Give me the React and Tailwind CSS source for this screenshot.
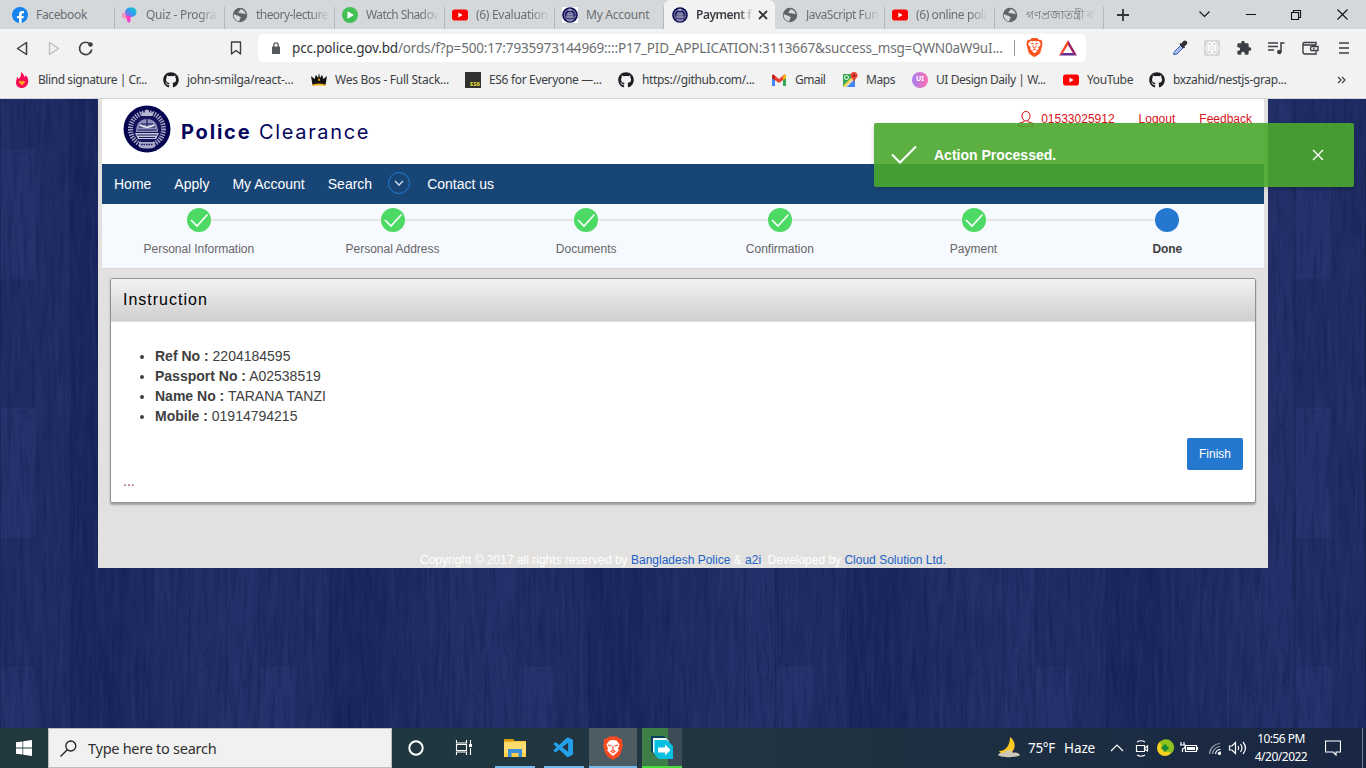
import React from "react";
import { FaGithub, FaFacebookF } from "react-icons/fa";
import { SiBrave } from "react-icons/si";
import { VscVscode } from "react-icons/vsc";
import { MdExtension } from "react-icons/md";

const ui = "font-['Noto_Sans','Open_Sans',sans-serif]";

function Emblem({ className }) {
  return (
    <svg viewBox="0 0 48 48" className={className}>
      <circle cx="24" cy="24" r="23.5" fill="#06054f" />
      <circle cx="24" cy="24" r="16.500" fill="none" stroke="#a9a8c8" strokeWidth="5" strokeDasharray="1.4 1.1" />
      <circle cx="24" cy="24" r="13.5" fill="#17165c" />
      <path d="M24 4l3 4 3-1-1 4h-10l-1-4 3 1z" fill="#b9b8d2" />
      <path d="M13 27c0-8 4-13 11-13s11 5 11 13z" fill="#8f8eb8" />
      <path d="M16 22h16M14.500 25h19M18 19h12M24 13v9" stroke="#17165c" strokeWidth="1.1" />
      <path d="M17 20c4 3 10 3 14 0" stroke="#fff" strokeWidth="1.300" fill="none" />
      <path d="M12 28h24l-3 6H15z" fill="#c6c5db" />
      <path d="M14 30h20M16 32.500h16" stroke="#17165c" strokeWidth="1" />
      <path d="M16 37h16v5c-4 2-12 2-16 0z" fill="#a9a8c8" />
      <path d="M18 39.500h12" stroke="#17165c" strokeWidth="1.600" strokeDasharray="1.500 1" />
    </svg>
  );
}

function YouTube() {
  return (
    <svg viewBox="0 0 16 16" className="h-4 w-4 shrink-0">
      <rect x="0" y="2.500" width="16" height="11" rx="2.800" fill="#f00" />
      <path d="M6.400 5.600v4.800l4.200-2.400z" fill="#fff" />
    </svg>
  );
}

function Globe() {
  return (
    <svg viewBox="0 0 16 16" className="h-4 w-4 shrink-0">
      <circle cx="8" cy="8" r="7.200" fill="#5f6368" />
      <path d="M1.800 7.200c1.800.3 2.900 1.300 4 1.300 1 0 1 1.200 2.300 1.200 1 0 .7 1.500-.2 2l-.5 2.500c-3.200 0-6-3-5.600-7z" fill="#d5d8da" />
      <path d="M8.400 2.300c-1 .8-.2 1.700-1.300 2.100-1 .4-1.200 1.300-.2 1.700 1.300.4 2.200-.4 3 .5.8 1 1.900.3 3.700.8-.1-2.700-2.500-5-5.200-5.100z" fill="#d5d8da" />
    </svg>
  );
}

function TabIcon({ kind }) {
  if (kind === "yt") return <YouTube />;
  if (kind === "globe") return <Globe />;
  if (kind === "fb")
    return (
      <span className="flex h-4 w-4 shrink-0 items-end justify-center overflow-hidden rounded-full bg-[#1584ee]">
        <FaFacebookF className="relative top-[1px] h-[13px] w-[13px] text-white" />
      </span>
    );
  if (kind === "quiz")
    return (
      <svg viewBox="0 0 16 16" className="h-4 w-4 shrink-0">
        <defs>
          <linearGradient id="quiz" x1="1" y1="0" x2="0" y2="1">
            <stop offset="0" stopColor="#12d6b4" />
            <stop offset=".45" stopColor="#2b9df4" />
            <stop offset="1" stopColor="#e64be0" />
          </linearGradient>
        </defs>
        <path d="M9 .5c4 0 5.500 2 5.500 4.800 0 2.700-2 4.500-5 4.700L6 11C3.800 9 2.500 8.500 2.800 6 3.200 2.500 5 .5 9 .5z" fill="url(#quiz)" />
        <path d="M1.500 6c-1 2-.6 4 .3 5M3.500 7c-.8 1.500-.5 3.500.5 5" stroke="#ff7bb0" strokeWidth="1.300" fill="none" />
        <path d="M4.200 9h4.300v5q-2 3.500-3.300 0z" fill="#ff3cc8" />
      </svg>
    );
  if (kind === "play")
    return (
      <svg viewBox="0 0 16 16" className="h-4 w-4 shrink-0">
        <circle cx="8" cy="8" r="8" fill="#42c054" />
        <path d="M5.500 4.200v7.600l6.500-3.800z" fill="#fff" />
      </svg>
    );
  return (
    <span className={kind === "embw" ? "h-4 w-4 shrink-0 bg-white" : "h-4 w-4 shrink-0"}>
      <Emblem className="h-4 w-4" />
    </span>
  );
}

const fade = "[mask-image:linear-gradient(to_right,#000_76%,rgba(0,0,0,0.1))]";

const tabs = [
  ["fb", "Facebook", "w-[115px] pl-3", "tracking-[-0.35px]"],
  ["quiz", "Quiz - Progra", "w-[110px] pl-[7px]", "tracking-[-0.25px] " + fade],
  ["globe", "theory-lecture", "w-[110px] pl-[7px]", "tracking-[-0.55px] " + fade],
  ["play", "Watch Shadov", "w-[110px] pl-[7px]", "tracking-[-0.6px] " + fade],
  ["yt", "(6) Evaluation", "w-[110px] pl-[7px]", "tracking-[-0.3px] " + fade],
  ["embw", "My Account", "w-[109px] pl-[7px]", "tracking-[-0.25px]"],
];
const tabsAfter = [
  ["globe", "JavaScript Fun", "w-[110px] pl-[7px]", "tracking-[-0.5px] " + fade],
  ["yt", "(6) online poli", "w-[110px] pl-[7px]", "tracking-[-0.4px] " + fade],
  ["globe", "গণপ্রজাতন্ত্রী ব", "w-[109px] pl-[7px]", fade],
];

function Tab({ t }) {
  return (
    <div className={"flex h-[22px] items-center border-r border-[#b4b8ba] pb-[6px] " + t[2]}>
      <TabIcon kind={t[0]} />
      <div className={"ml-2 whitespace-nowrap text-[12px] leading-[18px] text-[#6b6f72] " + t[3]}>{t[1]}</div>
    </div>
  );
}

function TabStrip() {
  return (
    <div className="flex h-[29px] bg-[#d4d8da]">
      <div className="flex pt-[7px]">
        {tabs.map((t) => <Tab key={t[1]} t={t} />)}
      </div>
      <div className="flex w-[111px] items-center rounded-t-[6px] bg-[#f2f2f2] pl-2 pt-px">
        <TabIcon kind="emb" />
        <div className={"ml-2 w-[56px] whitespace-nowrap text-[12px] font-semibold tracking-[-0.5px] text-[#3b3e44] " + fade}>Payment f</div>
        <svg viewBox="0 0 10 10" className="ml-[6px] h-[10px] w-[10px]"><path d="M1 1l8 8M9 1L1 9" stroke="#333" strokeWidth="1.800" /></svg>
      </div>
      <div className="flex pt-[7px]">
        {tabsAfter.map((t) => <Tab key={t[1]} t={t} />)}
      </div>
      <svg viewBox="0 0 12 12" className="ml-[13px] mt-[9px] h-3 w-3"><path d="M6 0v12M0 6h12" stroke="#333" strokeWidth="1.800" /></svg>
      <svg viewBox="0 0 150 14" className="ml-[69px] mt-[7px] h-[14px] w-[150px]" fill="none" stroke="#111" strokeWidth="1.100">
        <path d="M1.500 4.500l5 5 5-5M48 7.500h10" />
        <path d="M93.500 5.500h7v7h-7zM95.500 5.500v-2h7v7h-2" />
        <path d="M139.500 2.500l10 10M149.500 2.500l-10 10" />
      </svg>
    </div>
  );
}

function Toolbar() {
  return (
    <div className="flex h-[37px] items-center bg-[#f2f2f2]">
      <svg viewBox="0 0 100 20" className="h-5 w-[100px]" fill="none" strokeLinejoin="round">
        <path d="M26.500 4.500v12l-9-6z" stroke="#3b3e44" strokeWidth="1.500" />
        <path d="M49.500 4.500v12l9-6z" stroke="#bbb" strokeWidth="1.300" />
        <path d="M90.500 6.500a6.200 6.200 0 1 0 1.300 5" stroke="#3b3e44" strokeWidth="1.600" />
        <circle cx="90.500" cy="6.500" r="2.300" fill="#3b3e44" />
      </svg>
      <svg viewBox="0 0 12 14" className="ml-[130px] h-[14px] w-3" fill="none"><path d="M1.500 1h9v12L6 9.500 1.500 13z" stroke="#3b3e44" strokeWidth="1.400" strokeLinejoin="round" /></svg>
      <div className="ml-4 flex h-7 w-[828px] items-center rounded bg-white">
        <svg viewBox="0 0 10 12" className="ml-[13px] h-3 w-[10px]"><path d="M1 4.500h8V12H1z" fill="#55585c" /><path d="M2.800 5V3a2.200 2.200 0 0 1 4.400 0v2" fill="none" stroke="#55585c" strokeWidth="1.300" /></svg>
        <div className="ml-[11px] w-[716px] whitespace-nowrap pt-px text-[13.500px] tracking-[-0.165px] text-[#6b6f72]">
          <span className="text-[#303338]">pcc.police.gov.bd</span>/ords/f?p=500:17:7935973144969::::P17_PID_APPLICATION:3113667&amp;success_msg=QWN0aW9uI...
        </div>
        <div className="ml-[6px] h-4 w-px bg-[#999]" />
        <SiBrave className="ml-[10px] h-[19px] w-[19px] text-[#fb5420]" />
        <svg viewBox="0 0 18 16" className="ml-[15px] h-4 w-[18px]">
          <path d="M9 0L0 15.500l3.600-2L9 5z" fill="#ff4724" />
          <path d="M0 15.500h18l-4-2.500H4z" fill="#662d91" />
          <path d="M9 0l9 15.500-4-2.300L9 5z" fill="#9e1f63" />
        </svg>
      </div>
      <svg viewBox="0 0 16 16" className="ml-[86px] h-4 w-4">
        <path d="M1.500 14.500l1-3 6-6 2.500 2.500-6 6z" fill="#a9bde8" stroke="#3c5cc0" strokeWidth="1" />
        <path d="M8 3.500l4.500 4.500M9 5l3-3.500c1.500-1 3.300.8 2.200 2.200L11 7z" stroke="#2f3237" strokeWidth="1.500" fill="#2f3237" />
      </svg>
      <svg viewBox="0 0 16 16" className="ml-4 h-4 w-4" fill="none" stroke="#fff">
        <rect width="16" height="16" fill="#d8d8d8" stroke="none" />
        <ellipse cx="8" cy="8" rx="6.500" ry="2.600" /><ellipse cx="8" cy="8" rx="6.500" ry="2.600" transform="rotate(60 8 8)" /><ellipse cx="8" cy="8" rx="6.500" ry="2.600" transform="rotate(120 8 8)" /><circle cx="8" cy="8" r="1" fill="#fff" />
      </svg>
      <MdExtension className="ml-[16px] h-4 w-4 text-[#3b3e44]" />
      <svg viewBox="0 0 17 14" className="ml-[16px] h-[14px] w-[17px]" fill="none" stroke="#3b3e44" strokeWidth="1.500"><path d="M0 2h10M0 5.500h10M0 9h6M13 11V2h3.500" /><circle cx="11.300" cy="11" r="1.500" fill="#3b3e44" /></svg>
      <svg viewBox="0 0 17 14" className="ml-[17px] h-[14px] w-[17px]" fill="none" stroke="#3b3e44" strokeWidth="1.400"><path d="M14 4V1.500H2.500q-1.500 0-1.500 2V11q0 2 2 2h11v-2.500M1 4h13M9.500 5.500H16v4H9.500q-1 0-1-2t1-2z" /><path d="M11 7.500h1.500" /></svg>
      <svg viewBox="0 0 10 12" className="ml-[20px] h-3 w-[10px]"><path d="M0 1h10M0 6h10M0 11h10" stroke="#3b3e44" strokeWidth="1.700" /></svg>
    </div>
  );
}

function BookmarkIcon({ kind }) {
  if (kind === "yt") return <YouTube />;
  if (kind === "gh") return <FaGithub className="h-4 w-4 shrink-0 text-[#1b1f24]" />;
  if (kind === "es6") return <span className="flex h-4 w-4 shrink-0 items-end justify-end bg-[#323330] pr-[1px] text-[6px] font-bold leading-[7px] text-[#e8e337]">ES6</span>;
  if (kind === "ui") return <span className="flex h-4 w-4 shrink-0 items-center justify-center rounded-full bg-linear-to-r from-[#a77bf0] to-[#fb6ab0] text-[7px] font-bold text-white">UI</span>;
  return (
    <svg viewBox="0 0 16 16" className="h-4 w-4 shrink-0">
      {kind === "flame" && <g><path d="M7 0c3 2 3 4 3.500 5 .8-.3 1-1.500 1-2 2.500 2.500 3 5 2.700 7-.5 3.500-3 6-6.400 6C4 16 2 13.500 2 10.500 2 8 3 7 3 5c1 .3 1.300 1 1.500 2C6.500 5.500 7.500 3 7 0z" fill="#fb0a55" /><path d="M8 13.500L5.300 10.800c-1-1.300 1-3 2.700-1.300 1.700-1.700 3.700 0 2.700 1.300z" fill="#ffab1a" /></g>}
      {kind === "crown" && <g><path d="M0 4l3.500 3L5 2.800 7 6l1-5 1 5 2-3.200L12.500 7 16 4l-1.500 9h-13z" fill="#111" /><path d="M1.500 12.500q6.500-2 13 0v1.500q-6.500-1.500-13 0zM8 6l1.200 2L8 9.200 6.800 8z" fill="#eaa812" /></g>}
      {kind === "gmail" && <g transform="translate(0 2)"><path d="M1 1.500h3V12H1z" fill="#4285f4" /><path d="M12 1.500h3V12h-3z" fill="#34a853" /><path d="M1 1v3l7 5 7-5V1l-1.500-.5L8 5 2.500.5z" fill="#ea4335" /><path d="M12 2.500L14 .5q1 0 1 1.500v2l-3 2.200z" fill="#fbbc04" /><path d="M1 2Q1 .5 2.500.5L4 2.500v3.700L1 4z" fill="#c5221f" /></g>}
      {kind === "maps" && <g><path d="M1 2h12v13H1z" fill="#34a853" /><path d="M1 15L13 3v12z" fill="#d5d7d9" /><path d="M5 15l8-8v8z" fill="#4285f4" /><path d="M1 14L12 3l1.500 1.500L3 15z" fill="#fbd34c" /><circle cx="4.500" cy="5.500" r="2" fill="none" stroke="#fff" /><path d="M12 0a3.600 3.600 0 0 1 3.600 3.600C15.600 6 12.500 7 12 10.500 11.500 7 8.400 6 8.400 3.600A3.600 3.600 0 0 1 12 0z" fill="#ea4335" /><circle cx="12" cy="3.600" r="1.200" fill="#8c1a12" /></g>}
    </svg>
  );
}

const bookmarks = [
  ["flame", "Blind signature | Cr...", "w-[149px]", "tracking-[-0.43px]"],
  ["gh", "john-smilga/react-...", "w-[148px]", "tracking-[-0.3px]"],
  ["crown", "Wes Bos - Full Stack...", "w-[154px]", "tracking-[-0.26px]"],
  ["es6", "ES6 for Everyone —...", "w-[153px]", "tracking-[-0.33px]"],
  ["gh", "https://github.com/...", "w-[153px]", "tracking-[-0.34px]"],
  ["gmail", "Gmail", "w-[71px]", "tracking-[-0.5px]"],
  ["maps", "Maps", "w-[70px]", "tracking-[-0.4px]"],
  ["ui", "UI Design Daily | W...", "w-[151px]", "tracking-[-0.43px]"],
  ["yt", "YouTube", "w-[86px]", "tracking-[-0.35px]"],
  ["gh", "bxzahid/nestjs-grap...", "w-[188px]", "tracking-[-0.35px]"],
];

function Bookmarks() {
  return (
    <div className="flex h-[33px] items-center border-b border-[#d3d5d6] bg-[#f2f2f2] pb-[5px] pl-[14px]">
      {bookmarks.map((b, i) => (
        <div key={i} className={"flex shrink-0 items-center " + b[2]}>
          <BookmarkIcon kind={b[0]} />
          <span className={"ml-2 whitespace-nowrap text-[12px] leading-4 text-[#3b3e44] " + b[3]}>{b[1]}</span>
        </div>
      ))}
      <svg viewBox="0 0 9 8" className="h-2 w-[9px]" fill="none" stroke="#44474b" strokeWidth="1.300"><path d="M1 1l3 3-3 3M5 1l3 3-3 3" /></svg>
    </div>
  );
}

function Wood() {
  return (
    <svg className="absolute inset-0 h-full w-full" width="1366" height="629">
      <defs>
        <filter id="grain" x="0" y="0" width="100%" height="100%" colorInterpolationFilters="sRGB">
          <feTurbulence type="fractalNoise" baseFrequency="0.2 0.015" numOctaves="4" seed="8" />
          <feColorMatrix values="0 0 0 0 0.18  0 0 0 0 0.24  0 0 0 0 0.48  3 0 0 0 -1.35" />
        </filter>
        <filter id="shade" x="0" y="0" width="100%" height="100%" colorInterpolationFilters="sRGB">
          <feTurbulence type="fractalNoise" baseFrequency="0.25 0.02" numOctaves="3" seed="21" />
          <feColorMatrix values="0 0 0 0 0.05  0 0 0 0 0.08  0 0 0 0 0.27  3 0 0 0 -1.45" />
        </filter>
        <pattern id="planks" width="259" height="259" patternUnits="userSpaceOnUse">
          <rect width="259" height="259" fill="#1f2c63" />
          <rect y="50" width="36" height="130" fill="#26346e" opacity=".7" />
          <rect x="70" width="55" height="259" fill="#1a265d" />
          <rect x="125" width="28" height="259" fill="#1d2960" />
          <rect x="190" width="36" height="259" fill="#212e66" />
          <rect x="226" width="33" height="259" fill="#222f68" />
          <path d="M.5 0v259M70.500 0v259M189.500 0v259M226.500 0v259M257.500 0v259" stroke="#142050" opacity=".6" />
          <path d="M82 0l3 45-9 30-6 60M95 0l8 35 6 45 8 55M84 118q-10 20-6 50M84 118q14 12 13 30M150 30q15 14 15 38M200 30q14 22 8 40 20 20 6 50M190 60q25-10 16-30M215 75q15-14 17 20M245 30q-9 17 0 40 12-20 0-40M12 60q12-14 20 0" fill="none" stroke="#131d4f" opacity=".5" />
        </pattern>
      </defs>
      <rect width="1366" height="629" fill="url(#planks)" />
      <rect width="1366" height="629" filter="url(#grain)" opacity=".3" />
      <rect width="1366" height="629" filter="url(#shade)" opacity=".3" />
    </svg>
  );
}

const steps = ["Personal Information", "Personal Address", "Documents", "Confirmation", "Payment", "Done"];

function Progress() {
  return (
    <div className="flex h-[65px] border-b border-[#d5d8da] bg-[#f6f9fe] pt-1">
      {steps.map((s, i) => (
        <div key={s} className="flex flex-1 flex-col items-center">
          <div className="flex w-full items-center">
            <span className={"h-[2px] flex-1 " + (i > 0 ? "bg-[#e6e6e6]" : "")} />
            {i < 5 ? (
              <span className="flex h-6 w-6 items-center justify-center rounded-full bg-[#4cd964]">
                <svg viewBox="0 0 24 24" className="h-6 w-6" fill="none"><path d="M4 12l6 6L20.500 6.500" stroke="#fff" strokeWidth="1.600" /></svg>
              </span>
            ) : (
              <span className="h-6 w-6 rounded-full bg-[#2578cf]" />
            )}
            <span className={"h-[2px] flex-1 " + (i < 5 ? "bg-[#e6e6e6]" : "")} />
          </div>
          <span className={"mt-[9px] text-[12px] leading-4 " + (i === 5 ? "font-bold tracking-[-0.1px] text-[#404040]" : "text-[#666]")}>{s}</span>
        </div>
      ))}
    </div>
  );
}

const details = [
  ["Ref No :", "2204184595"],
  ["Passport No :", "A02538519"],
  ["Name No :", "TARANA TANZI"],
  ["Mobile :", "01914794215"],
];

function Site() {
  return (
    <div className="relative h-[629px] overflow-hidden font-['Liberation_Sans',Arial,sans-serif]">
      <Wood />
      <div className="relative mx-auto flex h-[469px] w-[1170px] flex-col bg-[#e2e1df] px-1">
        <div className="flex h-[65px] justify-between bg-white">
          <div className="flex pl-[21px] pt-[6px]">
            <Emblem className="h-12 w-12" />
            <div className="ml-[10px] mt-[15px] flex whitespace-nowrap font-['Inter',sans-serif] text-[20px] leading-6 text-[#06055c]">
              <b className="w-[78px] tracking-[1.800px]">Police</b><span className="tracking-[1.650px]">Clearance</span>
            </div>
          </div>
          <div className="flex pr-3 pt-3 text-[12px] leading-4 text-[#d9101a]">
            <svg viewBox="0 0 16 16" className="mr-[7px] h-4 w-4" fill="none" stroke="#d9101a" strokeWidth="1"><path d="M8 .5c2.800 0 4 2 4 4.500S10.500 10 8 10 4 7.500 4 5 5.200.5 8 .5zM6 9.500v1.300L.5 12.500v3h15v-3L10 10.800V9.500" /></svg>
            <span>01533025912</span><span className="ml-6">Logout</span><span className="ml-6">Feedback</span>
          </div>
        </div>
        <nav className="flex h-10 items-center bg-[#174676] pl-3 text-[14px] text-white">
          <span>Home</span><span className="ml-[23px]">Apply</span><span className="ml-[23px]">My Account</span><span className="ml-[23px]">Search</span>
          <span className="relative -top-px ml-4 flex h-[22px] w-[22px] items-center justify-center rounded-full border border-[#2578cf]">
            <svg viewBox="0 0 10 6" className="h-[6px] w-[10px]" fill="none"><path d="M1 1l4 4 4-4" stroke="#dce6f0" strokeWidth="1.300" /></svg>
          </span>
          <span className="ml-[17px]">Contact us</span>
        </nav>
        <Progress />
        <section className="mx-2 mt-[9px] flex h-[225px] flex-col rounded-[2px] border border-[#929092] bg-white shadow-[0_2px_2px_rgba(0,0,0,0.28)]">
          <h1 className="flex h-[43px] items-center border-b border-[#e0e0e0] bg-linear-to-b from-[#f3f3f3] to-[#cfcfcf] pl-3 text-[16px] leading-5 tracking-[1px] text-black">Instruction</h1>
          <ul className="ml-11 mt-6 list-disc text-[14px] leading-5 text-[#404040]">
            {details.map((d) => <li key={d[0]}><b>{d[0]}</b> {d[1]}</li>)}
          </ul>
          <button className="mr-3 mt-3 h-8 w-14 self-end rounded-[2px] bg-[#2578cf] text-[12px] text-white">Finish</button>
          <div className="ml-3 mt-px text-[14px] leading-5 text-[#a03c3c]">...</div>
        </section>
        <footer className="mt-[49px] pl-[318px] text-[12px] leading-4 text-white">
          Copyright © 2017 all rights reserved by <span className="text-[#2062c8]">Bangladesh Police</span> &amp; <span className="text-[#2062c8]">a2i</span>. Developed by <span className="text-[#2062c8]">Cloud Solution Ltd.</span>
        </footer>
      </div>
      <div className="absolute right-3 top-[24px] flex h-16 w-[480px] items-center rounded-[2px] bg-[rgba(74,168,45,0.905)] pl-[17px] pr-[30px] text-white shadow-[0_2px_4px_rgba(0,0,0,0.2)]">
        <svg viewBox="0 0 26 20" className="h-5 w-[26px]" fill="none"><path d="M1 9.500l8 8L25 1.500" stroke="#fff" strokeWidth="2" /></svg>
        <b className="ml-[17px] flex-1 text-[14px]">Action Processed.</b>
        <svg viewBox="0 0 12 12" className="h-3 w-3"><path d="M1 1l10 10M11 1L1 11" stroke="#fff" strokeWidth="1.400" /></svg>
      </div>
    </div>
  );
}

function Taskbar() {
  return (
    <div className="flex h-10 bg-linear-to-r from-[#21393f] via-[#203540] to-[#192642] text-white">
      <div className="flex w-12 items-center justify-center">
        <svg viewBox="0 0 16 16" className="h-4 w-4" fill="#fff"><path d="M0 2.300l6.500-.9v6.200H0zM7.200 1.300L16 0v7.600H7.200zM0 8.400h6.500v6.200L0 13.700zM7.200 8.400H16V16l-8.800-1.300z" /></svg>
      </div>
      <div className="flex w-[344px] items-center border border-[#bdbdbd] bg-[#f1f1f1] pl-[11px] text-[#303030]">
        <svg viewBox="0 0 17 17" className="h-[17px] w-[17px]" fill="none" stroke="#222" strokeWidth="1.300"><circle cx="10.800" cy="6" r="5" /><path d="M7.300 9.800L.5 16.500" /></svg>
        <span className="ml-[11px] pt-px text-[14.500px] tracking-[-0.270px]">Type here to search</span>
      </div>
      <svg viewBox="0 0 48 40" className="h-10 w-12" fill="none"><circle cx="24" cy="20" r="6.700" stroke="#fff" strokeWidth="2" /></svg>
      <svg viewBox="0 0 55 40" className="h-10 w-[55px]" fill="none" stroke="#fff" strokeWidth="1.100"><path d="M16.500 12v3h10v-3M16.500 27v-3h10v3M16.500 16.500h10v6h-10zM30.500 12v4M30.500 20v7" /><path d="M29 16h3v3h-3z" fill="#fff" stroke="none" /></svg>
      <div className="flex w-10 items-center justify-center border-b-2 border-[#76b9ed]">
        <svg viewBox="0 0 22 18" className="mt-[2px] h-[18px] w-[22px]"><path d="M0 0h9l1.500 2H22v16H0z" fill="#ffcf48" /><path d="M0 0h9l1.500 2.500H0z" fill="#d99a13" /><path d="M0 3.500h22V14H0z" fill="#ffdc70" /><path d="M4 10h14v8h-3.500v-4h-7v4H4z" fill="#3d8fd8" /></svg>
      </div>
      <div className="ml-[9px] flex w-10 items-center justify-center border-b-2 border-[#76b9ed]"><VscVscode className="mt-[2px] h-6 w-6 text-[#23a0e8]" /></div>
      <div className="ml-[5px] flex w-12 items-center justify-center border-b-2 border-[#76b9ed] bg-[#4d5c62]">
        <svg viewBox="0 0 20 24" className="mt-px h-6 w-5"><path d="M4 2.500L6 .5h8l2 2 2-.2 1.600 3.200-.8 2L20 9l-2.500 9-2 2.500L10 24l-5.500-3.500-2-2.500L0 9l1.200-1.500-.8-2L2 2.300z" fill="#fb4a22" /><path d="M10 4l3.500.5 3 4-1.500 4 .8 2-3 3L10 20l-2.800-2.500-3-3 .8-2-1.500-4 3-4z" fill="#fff" /><path d="M5 9l3.500 1M15 9l-3.500 1M10 10v4l-2 1.500 2 1.200 2-1.200-2-1.500" stroke="#fb4a22" strokeWidth="1.100" fill="none" /></svg>
      </div>
      <div className="ml-[5px] flex w-10 items-center justify-center border-b-2 border-[#46dd3c] bg-linear-to-r from-[#3e7d48] from-65% to-[#3d4b57] to-65%">
        <svg viewBox="0 0 22 23" className="mt-px h-[23px] w-[22px]"><path d="M0 0h13l4 4v15H4l-4-4z" fill="#063f5c" /><path d="M2 2h13l3 3v15H6l-4-4z" fill="#e8fbfd" /><path d="M3.500 4h12.500l6 6v13H8l-4.500-4.500z" fill="#08bfdf" /><path d="M7 11.500h7V8.500l5.500 5.500-5.500 5.500v-3H7z" fill="#fff" /></svg>
      </div>
      <div className="ml-auto flex items-center">
        <svg viewBox="0 0 24 22" className="h-[22px] w-6"><path d="M13 0c7 5 6 15-2 17-5 1-8-1-9-3 7 0 11-6 11-14z" fill="#fdc823" /><path d="M1 18c2-3 5-2 6-2 2-4 8-3 9 0 3-1 6 0 7 2-3 3-19 3-22 0z" fill="#cfc7b8" /></svg>
        <span className="ml-[7px] w-9 whitespace-nowrap pt-px text-[13.500px] tracking-[-0.300px]">75°F</span><span className="w-[46px] pt-px text-[13.500px] tracking-[-0.100px]">Haze</span>
        <svg viewBox="0 0 140 20" className="h-5 w-[140px]" fill="none" stroke="#fff" strokeWidth="1.200">
          <path d="M1 13l6-6 6 6" />
          <path d="M26.500 7.500h8v6h-8zM35 10l2.500-2v5L35 11.500M27 4q4-2.500 8 0M27 17q4 2.500 8 0" />
          <circle cx="55" cy="10" r="8" fill="#f4d21f" stroke="none" /><path d="M50 4a8 8 0 0 1 12 11q-9 0-12-11z" fill="#8fc31f" stroke="none" /><path d="M55 6.500v7M51.500 10h7" stroke="#138a35" strokeWidth="3" />
          <path d="M75.500 7.500h11v6h-11zM87.500 9v3M71 4v3M74 4v3M70 7h5v2q-1 2-2.500 2v3" /><path d="M77 9h8v3h-8z" fill="#fff" stroke="none" />
          <path d="M99.500 16A11 11 0 0 1 110 5.500M102.500 16A8 8 0 0 1 110 8.500" stroke="#9aa2ac" /><path d="M105.500 16a5 5 0 0 1 5-4.500M108 16a3 3 0 0 1 3-2" /><circle cx="109.500" cy="15.500" r="1" fill="#fff" />
          <path d="M119.500 8h2.500l3.500-3.500v11L122 12h-2.500zM128 8q1.500 2 0 4M130.500 6q3 4 0 8M133 4q5 6 0 12" />
        </svg>
        <div className="-ml-2 w-[78px] pb-px text-center text-[12px] leading-[18px]"><div className="tracking-[-0.550px]">10:56 PM</div><div className="tracking-[-0.500px]">4/20/2022</div></div>
        <svg viewBox="0 0 16 16" className="ml-[5px] h-4 w-4" fill="none" stroke="#fff" strokeWidth="1.200"><path d="M.5 1h15v11H11v3l-3-3H.5z" /></svg>
        <div className="ml-[21px] mr-[3px] h-10 w-px bg-[#77818e]" />
      </div>
    </div>
  );
}

export default function App() {
  return (
    <div className={"h-[768px] w-[1366px] overflow-hidden " + ui}>
      <TabStrip />
      <Toolbar />
      <Bookmarks />
      <Site />
      <Taskbar />
    </div>
  );
}
